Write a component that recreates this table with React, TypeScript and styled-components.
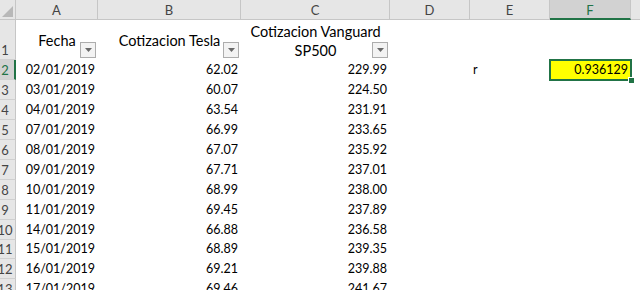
import styled, { createGlobalStyle } from "styled-components";

const GlobalStyle = createGlobalStyle`
  html, body {
    margin: 0;
    padding: 0;
    background: #fff;
  }
  body {
    width: 640px;
    height: 290px;
    overflow: hidden;
    font-family: Lato, "Liberation Sans", sans-serif;
  }
`;

const GREEN = "#217346";

const columns = [
    { key: "A", width: 82 },
    { key: "B", width: 143 },
    { key: "C", width: 149 },
    { key: "D", width: 80 },
    { key: "E", width: 80 },
    { key: "F", width: 81 },
    { key: "", width: 40 },
];

const data = [
    ["02/01/2019", "62.02", "229.99"],
    ["03/01/2019", "60.07", "224.50"],
    ["04/01/2019", "63.54", "231.91"],
    ["07/01/2019", "66.99", "233.65"],
    ["08/01/2019", "67.07", "235.92"],
    ["09/01/2019", "67.71", "237.01"],
    ["10/01/2019", "68.99", "238.00"],
    ["11/01/2019", "69.45", "237.89"],
    ["14/01/2019", "66.88", "236.58"],
    ["15/01/2019", "68.89", "239.35"],
    ["16/01/2019", "69.21", "239.88"],
    ["17/01/2019", "69.46", "241.67"],
];

export default function App() {
    return (
        <>
            <GlobalStyle />
            <Sheet>
                <HeaderRow>
                    <Corner>
                        <CornerMark />
                    </Corner>
                    {columns.map((c, i) => (
                        <ColHead key={i} w={c.width} selected={c.key === "F"}>
                            {c.key}
                        </ColHead>
                    ))}
                </HeaderRow>

                <Row h={40}>
                    <RowHead>
                        <RowNum>1</RowNum>
                    </RowHead>
                    <Cell w={82} align="center" middle big>
                        Fecha
                        <FilterButton />
                    </Cell>
                    <Cell w={143} align="center" middle big>
                        Cotizacion Tesla
                        <FilterButton />
                    </Cell>
                    <Cell w={149} align="center" middle big>
                        <Wrapped>
                            Cotizacion Vanguard
                            <br />
                            SP500
                        </Wrapped>
                        <FilterButton />
                    </Cell>
                    <Cell w={80} />
                    <Cell w={80} />
                    <Cell w={81} />
                    <Cell w={40} />
                </Row>

                {data.map((r, i) => {
                    const n = i + 2;
                    return (
                        <Row key={n} h={n === 11 ? 19 : 20}>
                            <RowHead selected={n === 2}>
                                <RowNum>{n}</RowNum>
                            </RowHead>
                            <Cell w={82}>{r[0]}</Cell>
                            <Cell w={143}>{r[1]}</Cell>
                            <Cell w={149}>{r[2]}</Cell>
                            <Cell w={80} />
                            <Cell w={80} align="left">{n === 2 ? "r" : ""}</Cell>
                            {n === 2 ? (
                                <ResultCell w={81}>
                                    0.936129
                                    <Selection>
                                        <FillHandle />
                                    </Selection>
                                </ResultCell>
                            ) : (
                                <Cell w={81} />
                            )}
                            <Cell w={40} />
                        </Row>
                    );
                })}
            </Sheet>
        </>
    );
}

const FilterButton = () => (
    <FilterBox>
        <svg width="7" height="4" viewBox="0 0 7 4">
            <path d="M0 0 H7 L3.5 4 Z" fill="#6a6a6a" />
        </svg>
    </FilterBox>
);

const Sheet = styled.div`
    width: 640px;
    height: 290px;
    overflow: hidden;
    display: flex;
    flex-direction: column;
`;

const HeaderRow = styled.div`
    display: flex;
    flex: none;
    height: 20px;
`;

const Corner = styled.div`
    position: relative;
    flex: none;
    width: 15px;
    height: 19px;
    background: #e6e6e6;
    border-right: 1px solid #c6c6c6;
    border-bottom: 1px solid #c6c6c6;
`;

const CornerMark = styled.div`
    position: absolute;
    right: 2px;
    bottom: 2px;
    width: 0;
    height: 0;
    border-left: 11px solid transparent;
    border-bottom: 11px solid #b8b8b8;
`;

const ColHead = styled.div<{ w: number; selected?: boolean }>`
    flex: none;
    box-sizing: border-box;
    width: ${({ w }) => w}px;
    height: 20px;
    display: flex;
    align-items: center;
    justify-content: center;
    font-size: 13px;
    color: ${({ selected }) => (selected ? GREEN : "#444")};
    background: ${({ selected }) => (selected ? "#d2d2d2" : "#e6e6e6")};
    border-right: 1px solid #c6c6c6;
    border-bottom: ${({ selected }) => (selected ? `2px solid ${GREEN}` : "1px solid #c6c6c6")};
    padding-top: ${({ selected }) => (selected ? "1px" : "0")};
`;

const Row = styled.div<{ h: number }>`
    display: flex;
    flex: none;
    height: ${({ h }) => h}px;
`;

const RowHead = styled.div<{ selected?: boolean }>`
    flex: none;
    box-sizing: border-box;
    width: 16px;
    display: flex;
    align-items: flex-end;
    justify-content: flex-start;
    overflow: hidden;
    font-size: 13px;
    color: ${({ selected }) => (selected ? GREEN : "#444")};
    background: ${({ selected }) => (selected ? "#d2d2d2" : "#e6e6e6")};
    border-right: ${({ selected }) => (selected ? `2px solid ${GREEN}` : "1px solid #c6c6c6")};
    border-bottom: 1px solid #d0d0d0;
`;

const RowNum = styled.span`
    flex: none;
    width: 20px;
    margin-left: -5px;
    text-align: center;
    line-height: 18px;
`;

const Cell = styled.div<{
    w: number;
    align?: "left" | "right" | "center";
    middle?: boolean;
    big?: boolean;
}>`
    position: relative;
    flex: none;
    box-sizing: border-box;
    width: ${({ w }) => w}px;
    display: flex;
    align-items: ${({ middle }) => (middle ? "center" : "flex-end")};
    justify-content: ${({ align }) =>
        align === "center" ? "center" : align === "left" ? "flex-start" : "flex-end"};
    text-align: ${({ align }) => align || "right"};
    padding: ${({ big }) => (big ? "1px 3px 0 3px" : "0 3px 1px 3px")};
    font-size: ${({ big }) => (big ? "14.5px" : "12.5px")};
    line-height: 18px;
    color: #000;
    white-space: nowrap;
`;

const Wrapped = styled.div`
    line-height: 19px;
`;

const ResultCell = styled(Cell)`
    background: #ffff00;
    z-index: 1;
`;

const Selection = styled.div`
    position: absolute;
    left: -1px;
    top: -1px;
    right: -1px;
    bottom: -1px;
    border: 2px solid ${GREEN};
    pointer-events: none;
`;

const FillHandle = styled.div`
    position: absolute;
    right: -5px;
    bottom: -5px;
    width: 5px;
    height: 5px;
    background: ${GREEN};
    border: 1px solid #fff;
`;

const FilterBox = styled.div`
    position: absolute;
    right: 2px;
    bottom: 2px;
    box-sizing: border-box;
    width: 16px;
    height: 16px;
    display: flex;
    align-items: center;
    justify-content: center;
    background: #f3f3f3;
    border: 1px solid #adadad;
`;
